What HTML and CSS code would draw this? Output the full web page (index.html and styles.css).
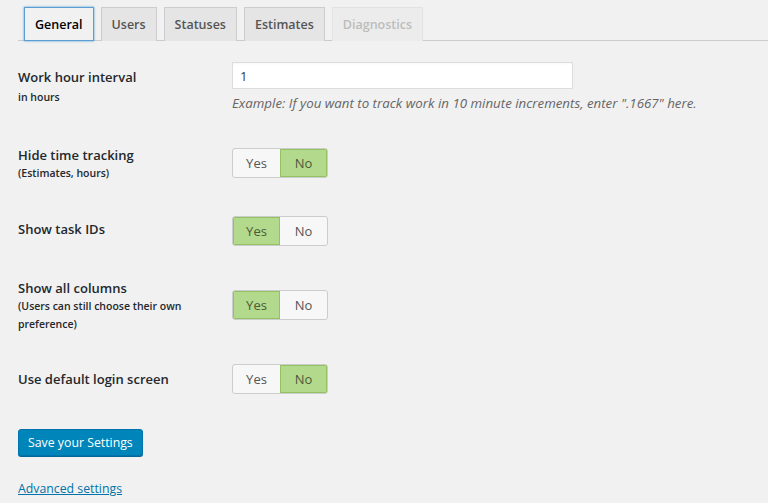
FILE: index.html
```html
<!DOCTYPE html>
<html>
<head>
<meta charset="utf-8">
<link rel="stylesheet" href="styles.css">
</head>
<body>
<div class="wrap">
  <nav class="tabs">
    <span class="tab active">General</span>
    <span class="tab">Users</span>
    <span class="tab">Statuses</span>
    <span class="tab">Estimates</span>
    <span class="tab disabled">Diagnostics</span>
  </nav>

  <div class="form">
    <div class="row row-interval">
      <div class="label">
        <div class="title">Work hour interval</div>
        <div class="sub">in hours</div>
      </div>
      <div class="field">
        <input class="text" type="text" value="1">
        <p class="desc">Example: If you want to track work in 10 minute increments, enter ".1667" here.</p>
      </div>
    </div>

    <div class="row row-hide">
      <div class="label">
        <div class="title">Hide time tracking</div>
        <div class="sub">(Estimates, hours)</div>
      </div>
      <div class="field">
        <div class="toggle"><span class="opt">Yes</span><span class="opt on">No</span></div>
      </div>
    </div>

    <div class="row row-ids">
      <div class="label">
        <div class="title">Show task IDs</div>
      </div>
      <div class="field">
        <div class="toggle"><span class="opt on">Yes</span><span class="opt">No</span></div>
      </div>
    </div>

    <div class="row row-cols">
      <div class="label">
        <div class="title">Show all columns</div>
        <div class="sub">(Users can still choose their own preference)</div>
      </div>
      <div class="field">
        <div class="toggle"><span class="opt on">Yes</span><span class="opt">No</span></div>
      </div>
    </div>

    <div class="row row-login">
      <div class="label">
        <div class="title">Use default login screen</div>
      </div>
      <div class="field">
        <div class="toggle"><span class="opt">Yes</span><span class="opt on">No</span></div>
      </div>
    </div>
  </div>

  <button class="save">Save your Settings</button>
  <div class="adv"><a href="#">Advanced settings</a></div>
</div>
</body>
</html>
```

FILE: styles.css
```css
html, body {
  margin: 0;
  padding: 0;
  background: #f1f1f1;
}
body {
  font-family: "Open Sans", "Noto Sans", sans-serif;
  color: #23282d;
  font-size: 13px;
}
.wrap {
  padding: 7px 0 0 18px;
}
.tabs {
  display: flex;
  gap: 7px;
  border-bottom: 1px solid #ccc;
  padding-left: 6px;
  height: 33px;
}
.tab {
  box-sizing: border-box;
  height: 34px;
  padding: 0 10px;
  display: flex;
  align-items: center;
  background: #e5e5e5;
  border: 1px solid #ccc;
  border-bottom: none;
  font-size: 12.5px;
  font-weight: 600;
  color: #555;
}
.tab.active {
  background: #f1f1f1;
  color: #000;
  border: 1px solid #5b9dd9;
  box-shadow: 0 0 2px rgba(30,140,190,.8);
}
.tab.disabled {
  background: #ececec;
  border-color: #e2e2e2;
  color: #bdbdbd;
}
.form {
  display: flex;
  flex-direction: column;
}
.row {
  display: grid;
  grid-template-columns: 214px 1fr;
  align-items: start;
}
.label .title {
  font-size: 13px;
  font-weight: 600;
  line-height: 18px;
}
.label .sub {
  font-size: 10.5px;
  font-weight: 600;
  line-height: 18px;
}
.row-interval { margin-top: 21px; }
.row-interval .label { padding-top: 6px; }
.row-interval .sub { margin-top: 2px; }
.text {
  box-sizing: border-box;
  width: 341px;
  height: 27px;
  margin: 0;
  border: 1px solid #ddd;
  background: #fff;
  font: 13px "Open Sans", sans-serif;
  padding: 0 7px;
  color: #32373c;
  box-shadow: inset 0 1px 2px rgba(0,0,0,.04);
}
.desc {
  margin: 5px 0 0;
  font-style: italic;
  color: #666;
  font-size: 13.3px;
}
.toggle {
  display: inline-flex;
  box-sizing: border-box;
  height: 30px;
  border: 1px solid #ccc;
  border-radius: 3px;
  background: #f7f7f7;
  overflow: hidden;
}
.opt {
  box-sizing: border-box;
  width: 47px;
  display: flex;
  align-items: center;
  justify-content: center;
  font-size: 13px;
  color: #555;
}
.opt.on {
  background: #b3d98c;
  box-shadow: inset 0 0 0 1px #93c263;
  color: #4a5a3a;
}
.row-hide { margin-top: 34px; }
.row-hide .toggle { margin-top: 2px; }
.row-ids { margin-top: 34px; }
.row-ids .label { padding-top: 4px; }
.row-cols { margin-top: 33px; }
.row-cols .toggle { margin-top: 11px; }
.row-login { margin-top: 31px; }
.row-login .label { padding-top: 6px; }
.save {
  display: block;
  margin-top: 35px;
  height: 27px;
  padding: 0 9px;
  background: #0085ba;
  border: 1px solid #0073aa;
  border-radius: 3px;
  color: #fff;
  font: 12.3px "Open Sans", sans-serif;
  box-shadow: 0 1px 0 #006799;
}
.adv {
  margin-top: 24px;
  font-size: 12.3px;
  line-height: 18px;
}
.adv a {
  color: #0073aa;
}
```
